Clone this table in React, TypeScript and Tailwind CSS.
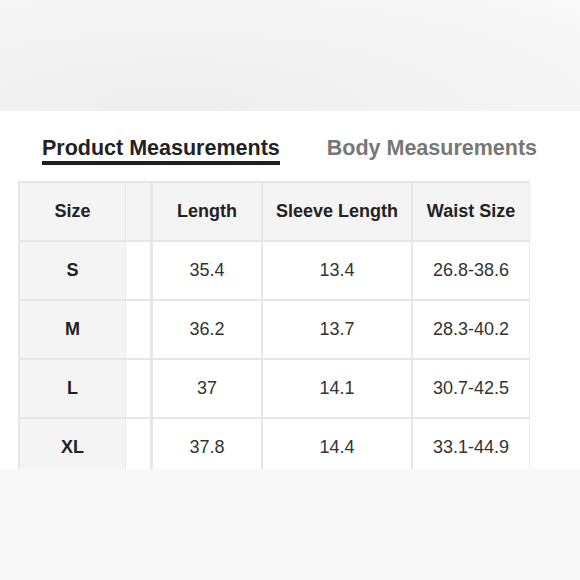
import React from "react";

const rows = [
  ["S", "35.4", "13.4", "26.8-38.6"],
  ["M", "36.2", "13.7", "28.3-40.2"],
  ["L", "37", "14.1", "30.7-42.5"],
  ["XL", "37.8", "14.4", "33.1-44.9"],
];

function Row({ cells, header }: { cells: string[]; header?: boolean }) {
  const base = "flex items-center justify-center h-[57px]";
  const bodyBg = header ? "bg-[#f4f4f4]" : "bg-white";
  const txt = header ? "font-bold text-[#222]" : "text-[#333]";
  return (
    <div className="flex border-b-2 border-[#e6e6e6]">
      <div className={`${base} w-[106px] bg-[#f4f4f4] border-r border-[#ebebeb] font-bold text-[#222]`}>{cells[0]}</div>
      <div className={`${base} w-[27px] ${bodyBg} border-r-[3px] border-[#e6e6e6]`}></div>
      <div className={`${base} w-[110px] ${bodyBg} border-r-2 border-[#e6e6e6] ${txt}`}>{cells[1]}</div>
      <div className={`${base} w-[150px] ${bodyBg} border-r-2 border-[#e6e6e6] ${txt}`}>{cells[2]}</div>
      <div className={`${base} w-[117px] ${bodyBg} border-r border-[#ebebeb] ${txt}`}>{cells[3]}</div>
    </div>
  );
}

export default function App() {
  return (
    <div className="w-[580px] h-[580px] overflow-hidden bg-white" style={{ fontFamily: '"Liberation Sans", Arial, sans-serif' }}>
      <div className="h-[111px] bg-[radial-gradient(ellipse_at_30%_100%,#eeeeee_0%,#f3f3f3_50%,#f9f9f9_100%)]" />
      <div className="h-[358px] bg-white overflow-hidden">
        <div className="flex pt-[25px] pl-[42px]">
          <div className="text-[21.5px] leading-[24px] font-bold text-[#222] border-b-4 border-[#1e1e1e] pb-[1px]">
            Product Measurements
          </div>
          <div className="ml-[47px] text-[21.5px] leading-[24px] font-bold text-[#777]">Body Measurements</div>
        </div>
        <div className="mt-[16px] ml-[18px] w-[512px] border-l-2 border-t-2 border-[#e6e6e6] text-[18px]">
          <Row header cells={["Size", "Length", "Sleeve Length", "Waist Size"]} />
          {rows.map((r) => (
            <Row key={r[0]} cells={r} />
          ))}
        </div>
      </div>
      <div className="h-[111px] bg-[#f8f8f8]" />
    </div>
  );
}
